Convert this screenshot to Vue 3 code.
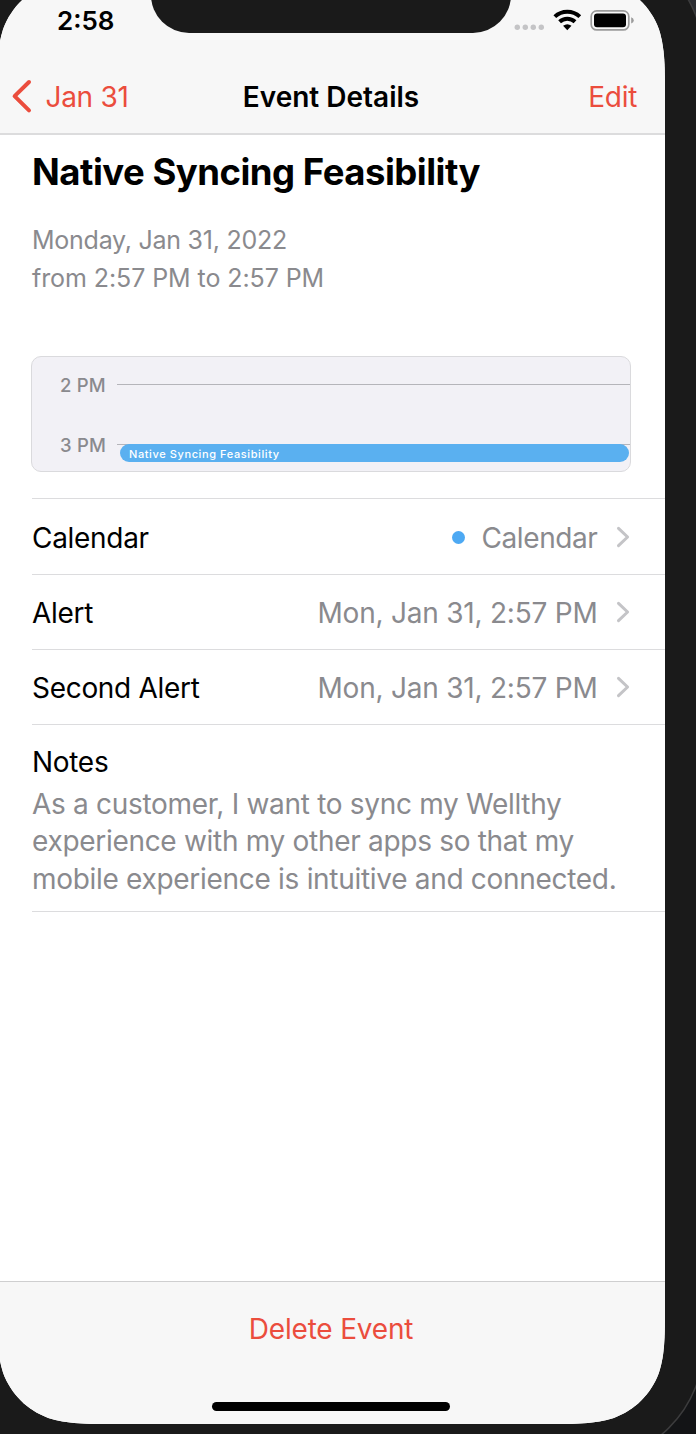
<script setup>
const rows = [
  { label: 'Calendar', value: 'Calendar', dot: true },
  { label: 'Alert', value: 'Mon, Jan 31, 2:57 PM' },
  { label: 'Second Alert', value: 'Mon, Jan 31, 2:57 PM' },
]
const notes = [
  'As a customer, I want to sync my Wellthy',
  'experience with my other apps so that my',
  'mobile experience is intuitive and connected.',
]
</script>

<template>
  <div class="stage">
    <svg class="bezel" width="696" height="1434" viewBox="0 0 696 1434">
      <rect width="696" height="700" fill="#2b2d32" />
      <rect y="700" width="696" height="734" fill="#131416" />
      <rect x="-44" y="-61" width="748" height="1524" rx="120" fill="#1a1a1a" stroke="#3c3c3d" stroke-width="1.5" />
    </svg>
    <div class="screen">
      <header class="top">
        <div class="status">
          <span class="time">2:58</span>
          <svg class="indicators" width="124" height="26" viewBox="0 0 124 26">
            <g fill="#c4c4c6">
              <circle cx="4.3" cy="19.3" r="2.7" /><circle cx="12.3" cy="19.3" r="2.7" />
              <circle cx="20.3" cy="19.3" r="2.7" /><circle cx="28.3" cy="19.3" r="2.7" />
            </g>
            <g fill="none" stroke="#000" stroke-width="4">
              <path d="M41.8 8.6A18.2 18.2 0 0 1 66.8 8.6" />
              <path d="M46.6 13.7A11.2 11.2 0 0 1 62 13.7" />
            </g>
            <path d="M50.1 17.8Q54.3 14.6 58.5 17.8L54.3 22.2Z" fill="#000" />
            <rect x="78.2" y="2.9" width="37.6" height="19" rx="5.5" fill="none" stroke="#9b9b9b" stroke-width="1.7" />
            <rect x="81" y="5.5" width="32" height="13.8" rx="3" fill="#000" />
            <path d="M118.2 9.2Q120.8 10.3 120.8 12.4T118.2 15.6Z" fill="#9b9b9b" />
          </svg>
        </div>
        <nav class="nav">
          <div class="back">
            <svg width="22" height="36" viewBox="0 0 22 36"><path d="M18 3L3.6 17.2L18 31.4" fill="none" stroke="#eb4d3d" stroke-width="4" stroke-linecap="round" stroke-linejoin="round" /></svg>
            <span>Jan 31</span>
          </div>
          <span class="nav-title">Event Details</span>
          <span class="edit">Edit</span>
        </nav>
      </header>
      <main class="body">
        <h1>Native Syncing Feasibility</h1>
        <p class="when">Monday, Jan 31, 2022<br><span class="span-time">from 2:57 PM to 2:57 PM</span></p>
        <section class="timeline">
          <div class="hour"><span>2 PM</span><i></i></div>
          <div class="hour"><span>3 PM</span><i></i></div>
          <div class="event">Native Syncing Feasibility</div>
        </section>
        <div v-for="row in rows" :key="row.label" class="row">
          <span>{{ row.label }}</span>
          <div class="value" :class="{ tagged: row.dot }">
            <i v-if="row.dot" class="dot"></i>
            <span>{{ row.value }}</span>
            <svg width="16" height="24" viewBox="0 0 16 24"><path d="M3.5 2.3L12.6 11L3.5 19.7" fill="none" stroke="#c4c4c7" stroke-width="3" stroke-linecap="round" stroke-linejoin="round" /></svg>
          </div>
        </div>
        <section class="notes">
          <h2>Notes</h2>
          <p><span v-for="line in notes" :key="line" class="line">{{ line }}</span></p>
        </section>
      </main>
      <footer class="bottom">
        <span class="delete">Delete Event</span>
        <i class="home"></i>
      </footer>
      <div class="notch"></div>
    </div>
  </div>
</template>

<style>
body { margin: 0; background: #1a1a1a; }
</style>
<style scoped>
* { box-sizing: border-box; }
.stage { position: relative; width: 696px; height: 1434px; overflow: hidden; font-family: Inter, sans-serif; font-size: 28px; letter-spacing: -0.3px; color: #000; }
.bezel { position: absolute; inset: 0; }
.screen {
  position: relative; display: flex; flex-direction: column; width: 668px; height: 1446px; margin: -22px 0 0 -3px; background: #fff;
  clip-path: path("M123.8 0H544.2C579.8 0 597.7 0 616.8 6.1C637.8 13.7 654.3 30.2 661.9 51.2C668 70.3 668 88.2 668 123.8V1322.2C668 1357.8 668 1375.7 661.9 1394.8C654.3 1415.8 637.8 1432.3 616.8 1439.9C597.7 1446 579.8 1446 544.2 1446H123.8C88.2 1446 70.3 1446 51.2 1439.9C30.2 1432.3 13.7 1415.8 6.1 1394.8C0 1375.7 0 1357.8 0 1322.2V123.8C0 88.2 0 70.3 6.1 51.2C13.7 30.2 30.2 13.7 51.2 6.1C70.3 0 88.2 0 123.8 0Z");
}
.top { height: 157px; flex: none; background: #f7f7f7; border-bottom: 2px solid #dcdcdd; }
.status { height: 81px; padding: 30px 28px 0 60px; display: flex; justify-content: space-between; }
.time { font-size: 26px; font-weight: 600; line-height: 26px; letter-spacing: 0; }
.nav { height: 76px; padding: 0 14px; display: grid; grid-template-columns: 1fr auto 1fr; align-items: center; line-height: 36px; }
.back { display: flex; align-items: center; gap: 12.5px; color: #eb4d3d; }
.nav-title { font-weight: 600; letter-spacing: 0; }
.edit { color: #eb4d3d; justify-self: end; margin-right: 14px; }
.body { flex: 1; padding-left: 35px; }
h1 { margin: 15px 0 0; font-size: 36.5px; line-height: 44px; font-weight: 700; letter-spacing: -0.5px; }
.when { margin: 28px 0 0; font-size: 25px; line-height: 37.7px; letter-spacing: -0.25px; color: #8a8a8e; }
.span-time { letter-spacing: -0.08px; }
.timeline { position: relative; width: 600px; height: 116px; margin: 58.6px 0 26.4px -1px; border: 1.5px solid #dadadd; border-radius: 10px; background: #f2f1f6; padding: 12px 0 0 28px; }
.hour { height: 60px; display: flex; gap: 11px; font-size: 18.5px; font-weight: 500; line-height: 32px; letter-spacing: .2px; color: #8a8a8e; }
.hour i { flex: 1; height: 1px; margin-top: 15px; background: #b5b5ba; }
.event { position: absolute; left: 88px; right: 1px; top: 87px; height: 18px; border-radius: 9px; background: #5ab0f0; color: #fff; font-size: 11px; font-weight: 500; line-height: 20px; padding-left: 9px; letter-spacing: .6px; }
.row { height: 75.2px; border-top: 1px solid #dcdcde; display: flex; align-items: center; justify-content: space-between; padding: 3px 34px 0 0; }
.value { display: flex; align-items: center; letter-spacing: -0.22px; color: #8a8a8e; }
.value svg { margin-left: 17.5px; }
.tagged { letter-spacing: -0.4px; }
.dot { width: 13px; height: 13px; border-radius: 50%; background: #4da9f3; margin-right: 16px; }
.notes { border-top: 1px solid #dcdcde; border-bottom: 1px solid #dcdcde; height: 188px; padding-top: 18px; }
h2 { margin: 0; font-size: 28px; font-weight: 400; line-height: 38px; }
.notes p { margin: 5px 0 0; color: #8a8a8e; line-height: 37.5px; }
.line { display: block; white-space: nowrap; }
.bottom { flex: none; height: 143px; margin-top: auto; background: #f7f7f7; border-top: 1px solid #cfcfd0; display: flex; flex-direction: column; align-items: center; }
.delete { color: #eb4d3d; line-height: 36px; margin-top: 29px; letter-spacing: -0.2px; }
.home { width: 238px; height: 9px; border-radius: 5px; background: #000; margin-top: 54.5px; }
.notch { position: absolute; left: 154px; top: -30px; width: 360px; height: 85px; border-radius: 0 0 38px 38px; background: #1a1a1a; }
</style>
